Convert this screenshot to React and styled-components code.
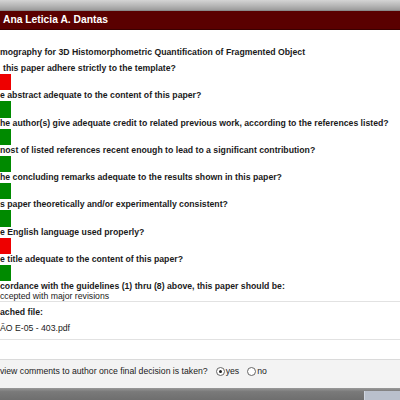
import React from 'react';
import styled, { createGlobalStyle } from 'styled-components';

const GlobalStyle = createGlobalStyle`
  html, body {
    margin: 0;
    padding: 0;
    background: #ffffff;
    overflow: hidden;
  }
  body {
    font-family: "Liberation Sans", Arial, sans-serif;
    color: #1a1a1a;
  }
`;

const Page = styled.div`
  width: 400px;
  height: 400px;
  display: flex;
  flex-direction: column;
  overflow: hidden;
`;

const WindowBar = styled.div`
  height: 10px;
  flex: none;
  background: linear-gradient(#d4d4d4, #b4b4b4 60%, #9c9c9c);
  border-bottom: 1px solid #8a8a8a;
`;

const Header = styled.div`
  height: 18px;
  flex: none;
  background: #5a0000;
  border-bottom: 1px solid #3a0000;
  color: #ffffff;
  font-weight: bold;
  font-size: 10.3px;
  line-height: 18px;
  padding-left: 3px;
`;

const Content = styled.div`
  flex: 1;
  display: flex;
  flex-direction: column;
  padding-top: 17px;
`;

const Line = styled.div`
  flex: none;
  height: 10px;
  line-height: 10px;
  font-size: 8.7px;
  font-weight: ${(p) => (p.$bold ? 'bold' : 'normal')};
  padding-left: ${(p) => p.$indent || 0}px;
  white-space: nowrap;
`;

const Question = styled.div`
  flex: none;
  display: flex;
  flex-direction: column;
  margin-top: ${(p) => (p.$first ? 6 : 0)}px;
`;

const Score = styled.div`
  width: 11px;
  height: 16.25px;
  margin-top: 1px;
  background: ${(p) => (p.$ok ? '#008a00' : '#ee0000')};
`;

const Section = styled.div`
  flex: none;
  border-top: 1px solid #e2e2e2;
  padding: 5px 0 6px;
  display: flex;
  flex-direction: column;
  gap: 6px;
`;

const Spacer = styled.div`
  height: 19px;
  flex: none;
  border-top: 1px solid #e2e2e2;
`;

const OptionRow = styled.div`
  flex: 1;
  background: #f3f3f3;
  border-top: 1px solid #dadada;
  display: flex;
  align-items: flex-start;
  padding-top: 6px;
  gap: 4px;
  font-size: 8.7px;
  line-height: 10px;
  white-space: nowrap;
`;

const Radio = styled.span`
  display: inline-flex;
  align-items: center;
  gap: 1px;
  margin-left: ${(p) => p.$ml || 0}px;
`;

const Circle = styled.span`
  width: 7px;
  height: 7px;
  border: 1px solid #666;
  border-radius: 50%;
  background: #fff;
  display: inline-flex;
  align-items: center;
  justify-content: center;
  &::after {
    content: '';
    width: 3px;
    height: 3px;
    border-radius: 50%;
    background: ${(p) => (p.$on ? '#222' : 'transparent')};
  }
`;

const BottomBar = styled.div`
  height: 12px;
  flex: none;
  background: linear-gradient(#9a9a9a, #7a7a7a 30%, #6e6e6e);
  display: flex;
  justify-content: flex-end;
  align-items: flex-end;
`;

const Tab = styled.div`
  width: 35px;
  height: 9px;
  background: #b9c0cc;
  border-left: 1px solid #d0d6e0;
`;

const questions = [
  { text: 'this paper adhere strictly to the template?', ok: false, indent: 3 },
  { text: 'e abstract adequate to the content of this paper?', ok: true },
  { text: 'he author(s) give adequate credit to related previous work, according to the references listed?', ok: true },
  { text: 'nost of listed references recent enough to lead to a significant contribution?', ok: true },
  { text: 'he concluding remarks adequate to the results shown in this paper?', ok: true },
  { text: 's paper theoretically and/or experimentally consistent?', ok: true },
  { text: 'e English language used properly?', ok: false },
  { text: 'e title adequate to the content of this paper?', ok: true },
];

export default function App() {
  return (
    <Page>
      <GlobalStyle />
      <WindowBar />
      <Header>Ana Leticia A. Dantas</Header>
      <Content>
        <Line $bold>mography for 3D Histomorphometric Quantification of Fragmented Object</Line>
        {questions.map((q, i) => (
          <Question key={q.text} $first={i === 0}>
            <Line $bold $indent={q.indent}>{q.text}</Line>
            <Score $ok={q.ok} />
          </Question>
        ))}
        <Question>
          <Line $bold>cordance with the guidelines (1) thru (8) above, this paper should be:</Line>
          <Line>ccepted with major revisions</Line>
        </Question>
        <Section>
          <Line $bold>ached file:</Line>
          <Line>ÃO E-05 - 403.pdf</Line>
        </Section>
        <Spacer />
        <OptionRow>
          <span>view comments to author once final decision is taken?</span>
          <Radio $ml={4}><Circle $on />yes</Radio>
          <Radio $ml={4}><Circle />no</Radio>
        </OptionRow>
      </Content>
      <BottomBar>
        <Tab />
      </BottomBar>
    </Page>
  );
}
